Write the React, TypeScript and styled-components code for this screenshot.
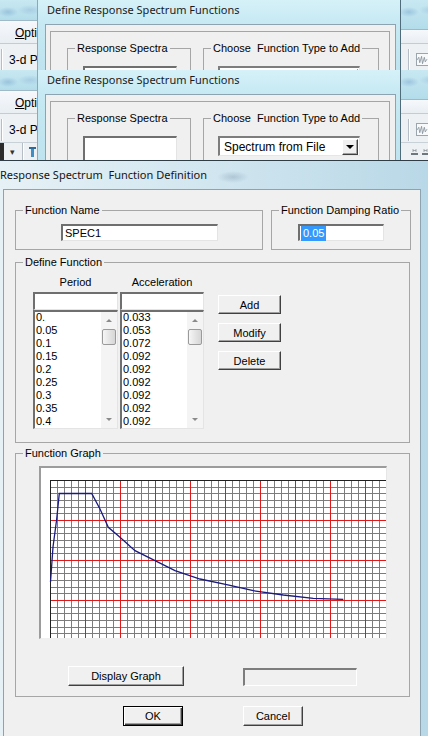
import React from 'react';
import styled, { createGlobalStyle } from 'styled-components';

const PERIODS = ['0.', '0.05', '0.1', '0.15', '0.2', '0.25', '0.3', '0.35', '0.4'];
const ACCELS = ['0.033', '0.053', '0.072', '0.092', '0.092', '0.092', '0.092', '0.092', '0.092'];

// spectrum curve, read off the plot in page pixels
const CURVE: [number, number][] = [
  [50.5, 583], [53, 548], [56.7, 520], [59.3, 494.5], [91.7, 494.5], [100, 510],
  [108.3, 528.3], [120, 538.3], [135, 551.7], [155, 561.7], [175, 571.7], [200, 580],
  [226.7, 585.7], [253.3, 591.7], [283.3, 596], [313.3, 599.3], [343.3, 600.3],
];

const ListBox: React.FC<{ items: string[] }> = ({ items }) => (
  <SList>
    <Items>
      {items.map((t, i) => (
        <div key={i}>{t}</div>
      ))}
    </Items>
    <ScrollBar>
      <ScrollArrow>
        <Tri $dir="up" />
      </ScrollArrow>
      <Thumb />
      <Track />
      <ScrollArrow>
        <Tri $dir="down" />
      </ScrollArrow>
    </ScrollBar>
  </SList>
);

// the two stacked captures of the "Define Response Spectrum Functions" dialog
// short = the upper capture, cut just below the top of the combo box
const BackCapture: React.FC<{ height: number; short?: boolean }> = ({ height, short }) => (
  <Strip $h={height}>
    <AppLeft>
      <AppGlass $h={21} />
      <MenuRow>
        <u>O</u>pti
      </MenuRow>
      <ToolRow>
        <ToolSep />
        <span>3-d P</span>
      </ToolRow>
      {!short && (
        <ToolRow2>
          <ComboEdge />
          <SmallDown>▾</SmallDown>
          <ToolSep />
          <svg width="8" height="12" viewBox="0 0 8 12">
            <rect x="0" y="1" width="7" height="2" fill="#2a6b9c" />
            <rect x="2" y="3" width="3" height="8" fill="#3f8fc4" />
          </svg>
        </ToolRow2>
      )}
    </AppLeft>

    <BackDialog>
      <DlgTitle>Define Response Spectrum Functions</DlgTitle>
      <DlgClient>
        <Panel>
          <BackGroup $w={124}>
            <Legend>Response Spectra</Legend>
            <GroupBody $pad="11px 0 0 15px">
              <Field $w={94} $h={26} />
            </GroupBody>
          </BackGroup>
          <BackGroup $w={176}>
            <Legend>Choose&nbsp; Function Type to Add</Legend>
            <GroupBody $pad="11px 0 0 14px">
              <Combo>
                {!short && <span>Spectrum from File</span>}
                <ComboBtn>
                  <Tri $dir="down" $dark />
                </ComboBtn>
              </Combo>
            </GroupBody>
          </BackGroup>
        </Panel>
      </DlgClient>
    </BackDialog>

    <AppRight>
      <AppGlass $h={30} />
      <MenuRow $blank />
      <ToolRow>
        <ToolSep $left={7} />
        <IconBox>
          <svg width="12" height="10" viewBox="0 0 12 10">
            <path d="M0 5 L2 2 L3 8 L5 1 L6 9 L8 2 L9 7 L11 4" stroke="#7a8790" fill="none" strokeWidth="0.8" />
          </svg>
        </IconBox>
      </ToolRow>
      {!short && (
        <ToolRow2>
          <svg width="27" height="12" viewBox="0 0 27 12">
            <path d="M12 3v3M15 3v3M12 4.5h3M23 3v3M26 3v3M23 4.5h3" stroke="#8c959b" strokeWidth="0.8" />
            <path d="M10 8h7M21 8h6" stroke="#6d777e" strokeWidth="2" />
          </svg>
        </ToolRow2>
      )}
    </AppRight>
  </Strip>
);

const Plot: React.FC = () => {
  const cols = Array.from({ length: 49 }, (_, k) => k);
  const rows = Array.from({ length: 24 }, (_, k) => k);
  const ry = (k: number) => Math.round(481 + (k * 20) / 3) + 0.5;
  return (
    <PlotBox>
      <svg width="345" height="170" viewBox="41 469 345 170" style={{ display: 'block' }}>
        {cols
          .filter((k) => k % 5 !== 0)
          .map((k) => (
            <line key={'gv' + k} x1={50.5 + 7 * k} y1={481} x2={50.5 + 7 * k} y2={640} stroke="#7c7c7c" />
          ))}
        {rows
          .filter((k) => k % 6 !== 0)
          .map((k) => (
            <line key={'gh' + k} x1={50} y1={ry(k)} x2={386} y2={ry(k)} stroke="#7c7c7c" />
          ))}
        {cols
          .filter((k) => k % 5 === 0 && k > 0)
          .map((k) => (
            <line key={'rv' + k} x1={50.5 + 7 * k} y1={481} x2={50.5 + 7 * k} y2={640} stroke="#e01818" />
          ))}
        {rows
          .filter((k) => k % 6 === 0 && k > 0)
          .map((k) => (
            <line key={'rh' + k} x1={50} y1={ry(k)} x2={386} y2={ry(k)} stroke="#e01818" />
          ))}
        <line x1={50} y1={481.5} x2={386} y2={481.5} stroke="#202020" />
        <line x1={50.5} y1={481} x2={50.5} y2={640} stroke="#202020" />
        <polyline
          points={CURVE.map(([x, y]) => `${x},${y}`).join(' ')}
          fill="none"
          stroke="#1a1a80"
          strokeWidth="1.3"
        />
      </svg>
    </PlotBox>
  );
};

const App: React.FC = () => (
  <>
    <GlobalStyle />
    <Screen>
      <BackCapture height={70} short />
      <BackCapture height={90} />

      <MainDialog>
        <MainTitle>Response Spectrum&nbsp; Function Definition</MainTitle>
        <MainClient>
          <Row>
            <Group $w={248}>
              <Legend>Function Name</Legend>
              <GroupBody $pad="7px 0 8px 45px">
                <Field $w={157} $h={17}>SPEC1</Field>
              </GroupBody>
            </Group>
            <Group $w={140}>
              <Legend>Function Damping Ratio</Legend>
              <GroupBody $pad="7px 0 8px 26px">
                <Field $w={86} $h={17}>
                  <Selected>0.05</Selected>
                </Field>
              </GroupBody>
            </Group>
          </Row>

          <Group $w={395} $mt={5}>
            <Legend>Define Function</Legend>
            <GroupBody $pad="5px 0 13px 17px">
              <DefineBody>
                <Table>
                  <ColHead>Period</ColHead>
                  <ColHead>Acceleration</ColHead>
                  <Field $w={85} $h={18} />
                  <Field $w={84} $h={18} />
                  <ListBox items={PERIODS} />
                  <ListBox items={ACCELS} />
                </Table>
                <ButtonCol>
                  <Button $w={63} $h={19}>Add</Button>
                  <Button $w={63} $h={19}>Modify</Button>
                  <Button $w={63} $h={19}>Delete</Button>
                </ButtonCol>
              </DefineBody>
            </GroupBody>
          </Group>

          <Group $w={395} $mt={3}>
            <Legend>Function Graph</Legend>
            <GroupBody $pad="6px 0 10px 23px">
              <Plot />
              <DisplayRow>
                <Button $w={116} $h={20}>Display Graph</Button>
                <StatusBox />
              </DisplayRow>
            </GroupBody>
          </Group>

          <FooterRow>
            <Button $w={60} $h={20} $default>OK</Button>
            <Button $w={60} $h={20}>Cancel</Button>
          </FooterRow>
        </MainClient>
      </MainDialog>
    </Screen>
  </>
);

export default App;

const GlobalStyle = createGlobalStyle`
  * { box-sizing: border-box; }
  html, body { margin: 0; padding: 0; }
  body {
    width: 428px;
    height: 736px;
    overflow: hidden;
    background: #bfe2ed;
    font-family: "Liberation Sans", Arial, sans-serif;
    font-size: 11px;
    color: #000;
  }
`;

const Screen = styled.div`
  display: flex;
  flex-direction: column;
  width: 428px;
  height: 736px;
  overflow: hidden;
`;

/* ---------- background captures ---------- */

const Strip = styled.div<{ $h: number }>`
  display: flex;
  flex: none;
  height: ${(p) => p.$h}px;
  overflow: hidden;
`;

const AppLeft = styled.div`
  width: 37px;
  flex: none;
  display: flex;
  flex-direction: column;
  background: #f0f0f0;
  overflow: hidden;
`;

const AppRight = styled(AppLeft)`
  width: 27px;
`;

const AppGlass = styled.div<{ $h: number }>`
  height: ${(p) => p.$h}px;
  flex: none;
  background:
    radial-gradient(ellipse 10px 5px at 8px 12px, rgba(90, 140, 190, 0.35), transparent),
    radial-gradient(ellipse 12px 5px at 30px 10px, rgba(120, 160, 200, 0.3), transparent),
    linear-gradient(180deg, #c8e8f2, #b3dcea);
  border-bottom: 1px solid #9fb9c6;
`;

const MenuRow = styled.div<{ $blank?: boolean }>`
  height: ${(p) => (p.$blank ? 14 : 23)}px;
  flex: none;
  padding: 3px 0 0 15px;
  font-size: 12px;
  line-height: 18px;
  white-space: nowrap;
  background: linear-gradient(180deg, #f6f8fb, #e9eef3);
  border-bottom: 1px solid #c3ccd4;
`;

const ToolRow = styled.div`
  height: 29px;
  flex: none;
  display: flex;
  align-items: center;
  gap: 7px;
  padding-top: 3px;
  font-size: 12px;
  white-space: nowrap;
  background: #eef1f4;
  border-bottom: 1px solid #c9d1d8;
`;

const ToolSep = styled.i<{ $left?: number }>`
  flex: none;
  width: 1px;
  height: 22px;
  margin-left: ${(p) => p.$left ?? 1}px;
  background: #b5bec6;
  box-shadow: 1px 0 0 #fff;
`;

const ToolRow2 = styled.div`
  flex: 1;
  display: flex;
  align-items: center;
  gap: 6px;
  background: #eef1f4;
  overflow: hidden;
`;

const ComboEdge = styled.i`
  width: 4px;
  height: 17px;
  background: #2c2c2c;
`;

const SmallDown = styled.span`
  font-size: 9px;
  color: #333;
`;

const IconBox = styled.div`
  width: 13px;
  height: 13px;
  border: 1px solid #9aa5ad;
  background: #f7f9fa;
  display: flex;
  align-items: center;
  justify-content: center;
`;

const BackDialog = styled.div`
  width: 364px;
  flex: none;
  display: flex;
  flex-direction: column;
  padding: 0 4px 0 7px;
  background: linear-gradient(180deg, #d6f1f8 0px, #c6e9f3 24px, #bfe4ef 100%);
  border-left: 1px solid #89a9b7;
  border-right: 1px solid #4f6c7a;
`;

const DlgTitle = styled.div`
  height: 24px;
  flex: none;
  padding: 1px 0 0 2px;
  font-family: "Noto Sans", "Liberation Sans", sans-serif;
  font-size: 11px;
  line-height: 18px;
  color: #1b1b1b;
  white-space: nowrap;
`;

const DlgClient = styled.div`
  flex: 1;
  padding: 6px 5px 0 4px;
  background: #f0f0f0;
  border: 1px solid #8ea3b0;
`;

const Panel = styled.div`
  display: flex;
  gap: 12px;
  height: 100%;
  padding: 9px 0 0 16px;
  border: 1px solid #a5a5a5;
`;

const Combo = styled.div`
  width: 142px;
  height: 20px;
  display: flex;
  align-items: center;
  justify-content: space-between;
  padding: 0 1px 0 4px;
  background: #fff;
  border-style: solid;
  border-width: 2px 1px 1px 2px;
  border-color: #7d7d7d #e6e6e6 #e6e6e6 #7d7d7d;
  font-size: 12px;
`;

const ComboBtn = styled.div`
  width: 16px;
  height: 16px;
  margin-left: auto;
  display: flex;
  align-items: center;
  justify-content: center;
  background: #f0f0f0;
  border: 1px solid;
  border-color: #fff #404040 #404040 #fff;
  box-shadow: inset -1px -1px 0 #a0a0a0;
`;

/* ---------- main dialog ---------- */

const MainDialog = styled.div`
  flex: 1;
  display: flex;
  flex-direction: column;
  padding: 0 7px 0 3px;
  border-top: 1px solid #2f3d46;
  background:
    radial-gradient(ellipse 16px 6px at 233px 16px, rgba(80, 110, 140, 0.25), transparent),
    linear-gradient(90deg, #e6f1f6 0%, #d3e7f0 45%, #b9d8e7 100%);
`;

const MainTitle = styled.div`
  height: 28px;
  flex: none;
  margin-left: -3px;
  font-family: "Noto Sans", "Liberation Sans", sans-serif;
  font-size: 11px;
  line-height: 28px;
  color: #151515;
  white-space: nowrap;
`;

const MainClient = styled.div`
  flex: 1;
  display: flex;
  flex-direction: column;
  padding: 13px 0 0 11px;
  background: #f0f0f0;
  border: 1px solid #8ea3b0;
  border-bottom: none;
`;

const Row = styled.div`
  display: flex;
  gap: 8px;
`;

const Group = styled.fieldset<{ $w: number; $mt?: number }>`
  width: ${(p) => p.$w}px;
  min-width: 0;
  margin: ${(p) => p.$mt ?? 0}px 0 0 0;
  padding: 0;
  border: 1px solid #a6a6a6;
`;

const BackGroup = styled(Group)`
  height: 60px;
`;

const Legend = styled.legend`
  margin-left: 7px;
  padding: 0 2px;
  font-size: 11px;
  line-height: 14px;
  white-space: nowrap;
`;

const GroupBody = styled.div<{ $pad: string }>`
  padding: ${(p) => p.$pad};
`;

const Field = styled.div<{ $w: number; $h: number }>`
  width: ${(p) => p.$w}px;
  height: ${(p) => p.$h}px;
  padding: 0 2px;
  background: #fff;
  border-style: solid;
  border-width: 2px 1px 1px 2px;
  border-color: #6f6f6f #e4e4e4 #e4e4e4 #6f6f6f;
  font-size: 11px;
  line-height: ${(p) => p.$h - 3}px;
  white-space: nowrap;
`;

const Selected = styled.span`
  display: inline-block;
  padding: 0 1px;
  line-height: 13px;
  background: #3399ff;
  color: #fff;
  box-shadow: 0 0 0 1px #3399ff;
`;

const DefineBody = styled.div`
  display: flex;
  align-items: flex-start;
`;

const Table = styled.div`
  display: grid;
  grid-template-columns: 85px 84px;
  grid-template-rows: 18px 18px 119px;
  column-gap: 2px;
  & > :nth-child(3),
  & > :nth-child(4) {
    margin-bottom: 1px;
  }
`;

const ColHead = styled.div`
  height: 16px;
  text-align: center;
  line-height: 16px;
`;

const SList = styled.div`
  width: 100%;
  height: 119px;
  display: flex;
  background: #fff;
  border-style: solid;
  border-width: 2px 1px 1px 2px;
  border-color: #6f6f6f #e4e4e4 #e4e4e4 #6f6f6f;
  overflow: hidden;
`;

const Items = styled.div`
  flex: 1;
  padding: 0 0 0 1px;
  line-height: 13px;
  margin-top: -1px;
`;

const ScrollBar = styled.div`
  width: 16px;
  flex: none;
  display: flex;
  flex-direction: column;
  background: #f4f4f4;
`;

const ScrollArrow = styled.div`
  height: 17px;
  flex: none;
  display: flex;
  align-items: center;
  justify-content: center;
`;

const Tri = styled.i<{ $dir: 'up' | 'down'; $dark?: boolean }>`
  width: 0;
  height: 0;
  border-left: ${(p) => (p.$dark ? 4 : 3)}px solid transparent;
  border-right: ${(p) => (p.$dark ? 4 : 3)}px solid transparent;
  ${(p) =>
    p.$dir === 'up'
      ? `border-bottom: 3px solid ${p.$dark ? '#000' : '#8a8a8a'};`
      : `border-top: ${p.$dark ? 4 : 3}px solid ${p.$dark ? '#000' : '#8a8a8a'};`}
`;

const Thumb = styled.div`
  height: 16px;
  flex: none;
  margin: 0 1px;
  border: 1px solid #9a9a9a;
  border-radius: 2px;
  background: linear-gradient(90deg, #f6f6f6, #e2e2e2 60%, #d6d6d6);
`;

const Track = styled.div`
  flex: 1;
`;

const ButtonCol = styled.div`
  display: flex;
  flex-direction: column;
  gap: 9px;
  margin-left: 14px;
  padding-top: 21px;
`;

const Button = styled.button<{ $w: number; $h: number; $default?: boolean }>`
  width: ${(p) => p.$w}px;
  height: ${(p) => p.$h}px;
  padding: 0;
  font-family: inherit;
  font-size: 11px;
  color: #000;
  background: #f0f0f0;
  border: 1px solid;
  border-color: ${(p) => (p.$default ? '#000' : '#fff #404040 #404040 #fff')};
  box-shadow: ${(p) =>
    p.$default
      ? 'inset 1px 1px 0 #fff, inset -1px -1px 0 #404040, inset -2px -2px 0 #a0a0a0'
      : 'inset -1px -1px 0 #a0a0a0'};
`;

const PlotBox = styled.div`
  width: 348px;
  height: 173px;
  background: #fff;
  border-style: solid;
  border-width: 2px 1px 1px 2px;
  border-color: #9c9c9c #e6e6e6 #f0f0f0 #9c9c9c;
  overflow: hidden;
`;

const DisplayRow = styled.div`
  display: flex;
  align-items: flex-end;
  gap: 59px;
  margin: 27px 0 0 29px;
`;

const StatusBox = styled.div`
  width: 114px;
  height: 18px;
  border-style: solid;
  border-width: 2px 1px 1px 2px;
  border-color: #7d7d7d #fff #fff #7d7d7d;
`;

const FooterRow = styled.div`
  display: flex;
  gap: 60px;
  margin-top: 9px;
  padding-left: 108px;
`;
